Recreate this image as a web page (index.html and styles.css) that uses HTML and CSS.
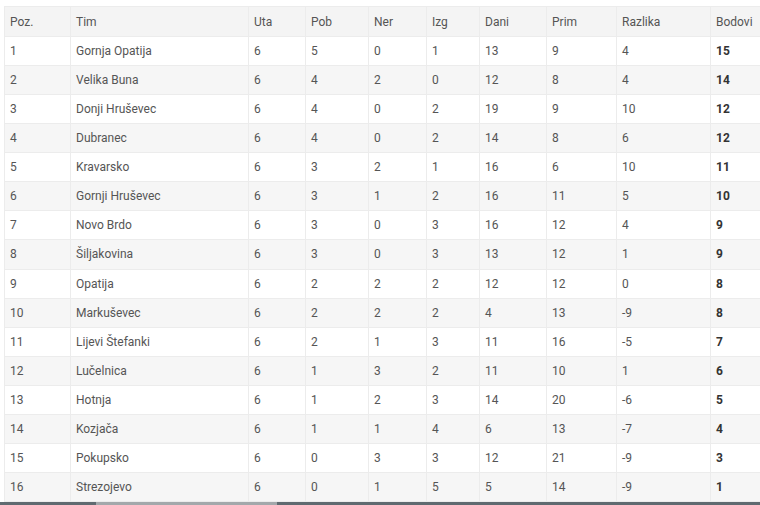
FILE: index.html
```html
<!DOCTYPE html>
<html lang="hr">
<head>
<meta charset="utf-8">
<title>Tablica</title>
<link rel="stylesheet" href="styles.css">
</head>
<body>
<div class="wrap">
<table class="standings">
<colgroup>
<col class="c-poz"><col class="c-tim"><col class="c-uta"><col class="c-pob"><col class="c-ner"><col class="c-izg"><col class="c-dani"><col class="c-prim"><col class="c-raz"><col class="c-bod">
</colgroup>
<thead>
<tr><th>Poz.</th><th>Tim</th><th>Uta</th><th>Pob</th><th>Ner</th><th>Izg</th><th>Dani</th><th>Prim</th><th>Razlika</th><th>Bodovi</th></tr>
</thead>
<tbody>
<tr><td>1</td><td>Gornja Opatija</td><td>6</td><td>5</td><td>0</td><td>1</td><td>13</td><td>9</td><td>4</td><td class="pts">15</td></tr>
<tr><td>2</td><td>Velika Buna</td><td>6</td><td>4</td><td>2</td><td>0</td><td>12</td><td>8</td><td>4</td><td class="pts">14</td></tr>
<tr><td>3</td><td>Donji Hruševec</td><td>6</td><td>4</td><td>0</td><td>2</td><td>19</td><td>9</td><td>10</td><td class="pts">12</td></tr>
<tr><td>4</td><td>Dubranec</td><td>6</td><td>4</td><td>0</td><td>2</td><td>14</td><td>8</td><td>6</td><td class="pts">12</td></tr>
<tr><td>5</td><td>Kravarsko</td><td>6</td><td>3</td><td>2</td><td>1</td><td>16</td><td>6</td><td>10</td><td class="pts">11</td></tr>
<tr><td>6</td><td>Gornji Hruševec</td><td>6</td><td>3</td><td>1</td><td>2</td><td>16</td><td>11</td><td>5</td><td class="pts">10</td></tr>
<tr><td>7</td><td>Novo Brdo</td><td>6</td><td>3</td><td>0</td><td>3</td><td>16</td><td>12</td><td>4</td><td class="pts">9</td></tr>
<tr><td>8</td><td>Šiljakovina</td><td>6</td><td>3</td><td>0</td><td>3</td><td>13</td><td>12</td><td>1</td><td class="pts">9</td></tr>
<tr><td>9</td><td>Opatija</td><td>6</td><td>2</td><td>2</td><td>2</td><td>12</td><td>12</td><td>0</td><td class="pts">8</td></tr>
<tr><td>10</td><td>Markuševec</td><td>6</td><td>2</td><td>2</td><td>2</td><td>4</td><td>13</td><td>-9</td><td class="pts">8</td></tr>
<tr><td>11</td><td>Lijevi Štefanki</td><td>6</td><td>2</td><td>1</td><td>3</td><td>11</td><td>16</td><td>-5</td><td class="pts">7</td></tr>
<tr><td>12</td><td>Lučelnica</td><td>6</td><td>1</td><td>3</td><td>2</td><td>11</td><td>10</td><td>1</td><td class="pts">6</td></tr>
<tr><td>13</td><td>Hotnja</td><td>6</td><td>1</td><td>2</td><td>3</td><td>14</td><td>20</td><td>-6</td><td class="pts">5</td></tr>
<tr><td>14</td><td>Kozjača</td><td>6</td><td>1</td><td>1</td><td>4</td><td>6</td><td>13</td><td>-7</td><td class="pts">4</td></tr>
<tr><td>15</td><td>Pokupsko</td><td>6</td><td>0</td><td>3</td><td>3</td><td>12</td><td>21</td><td>-9</td><td class="pts">3</td></tr>
<tr><td>16</td><td>Strezojevo</td><td>6</td><td>0</td><td>1</td><td>5</td><td>5</td><td>14</td><td>-9</td><td class="pts">1</td></tr>
</tbody>
</table>
</div>
<div class="scrollbar"><div class="seg seg-a"></div><div class="seg seg-b"></div><div class="seg seg-c"></div></div>
</body>
</html>
```
FILE: styles.css
```css
html, body {
  margin: 0;
  padding: 0;
  background: #fff;
  overflow: hidden;
}
body {
  width: 760px;
  height: 505px;
  font-family: Roboto, "Liberation Sans", sans-serif;
  font-size: 12px;
  color: #555;
}
.wrap {
  padding: 6px 0 0 4px;
  height: 496px;
  overflow: hidden;
}
.standings {
  table-layout: fixed;
  border-collapse: collapse;
  width: 826px;
}
.c-poz { width: 66px; }
.c-tim { width: 178px; }
.c-uta { width: 57px; }
.c-pob { width: 63px; }
.c-ner { width: 58px; }
.c-izg { width: 53px; }
.c-dani { width: 67px; }
.c-prim { width: 70px; }
.c-raz { width: 94px; }
.c-bod { width: 120px; }
.standings th,
.standings td {
  height: 28.07px;
  padding: 0 5px;
  border: 1px solid #ececec;
  text-align: left;
  font-weight: 400;
  white-space: nowrap;
  line-height: 14px;
}
.standings thead th {
  height: 29px;
  background: #f4f4f4;
  color: #555;
}
.standings tbody tr:nth-child(even) td {
  background: #f6f6f6;
}
.standings td.pts {
  font-weight: 700;
  color: #333;
}
.scrollbar {
  display: flex;
  height: 3px;
}
.seg { height: 3px; }
.seg-a { width: 96px; background: #5f6a70; }
.seg-b { width: 181px; background: #a3a8ab; }
.seg-c { flex: 1; background: #5f6a70; }
```
